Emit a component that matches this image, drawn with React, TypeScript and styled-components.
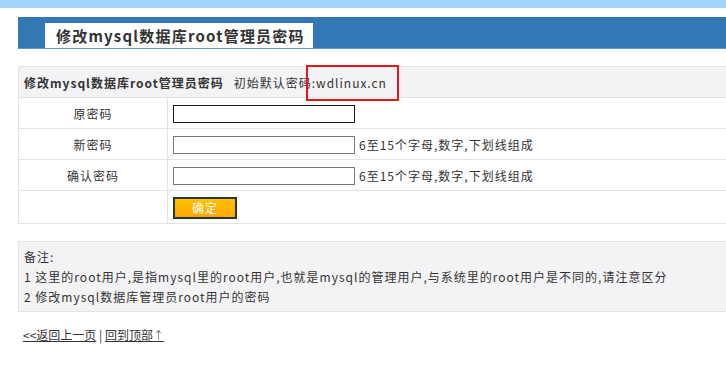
import styled, { createGlobalStyle } from 'styled-components';

const GlobalStyle = createGlobalStyle`
  body {
    margin: 0;
    font-family: "Noto Sans CJK SC", "Noto Sans", sans-serif;
    font-size: 12px;
    letter-spacing: 1px;
    color: #333;
    background: #fff;
    overflow: hidden;
  }
`;

const rows = [
  { label: '原密码', hint: '', focused: true },
  { label: '新密码', hint: '6至15个字母,数字,下划线组成', focused: false },
  { label: '确认密码', hint: '6至15个字母,数字,下划线组成', focused: false },
];

export default function App() {
  return (
    <>
      <GlobalStyle />
      <TopStrip />
      <Main>
        <TitleBar>
          <Tab>修改mysql数据库root管理员密码</Tab>
        </TitleBar>
        <FormTable>
          <tbody>
            <HeadRow>
              <HeadCell colSpan={2}>
                <strong>修改mysql数据库root管理员密码</strong>
                <Default>
                  初始默认密码<Marked>:wdlinux.cn<RedBox /></Marked>
                </Default>
              </HeadCell>
            </HeadRow>
            {rows.map((r) => (
              <Row key={r.label}>
                <LabelCell>{r.label}</LabelCell>
                <FieldCell>
                  <Input type="password" $focused={r.focused} />
                  {r.hint && <Hint>{r.hint}</Hint>}
                </FieldCell>
              </Row>
            ))}
            <Row $last>
              <LabelCell />
              <FieldCell>
                <Button>确定</Button>
              </FieldCell>
            </Row>
          </tbody>
        </FormTable>
        <Notes>
          <div>备注:</div>
          <div>1 这里的root用户,是指mysql里的root用户,也就是mysql的管理用户,与系统里的root用户是不同的,请注意区分</div>
          <div>2 修改mysql数据库管理员root用户的密码</div>
        </Notes>
        <Links>
          <a href="#">&lt;&lt;返回上一页</a> | <a href="#">回到顶部<Arrow>↑</Arrow></a>
        </Links>
      </Main>
    </>
  );
}

const TopStrip = styled.div`
  height: 8px;
  background: #a6d4fa;
`;

const Main = styled.div`
  padding: 9px 0 0 18px;
`;

const TitleBar = styled.div`
  height: 32px;
  background: #3178b4;
  border-bottom: 1px solid #5b97c8;
  box-sizing: border-box;
  display: flex;
  align-items: flex-end;
  padding-left: 27px;
`;

const Tab = styled.div`
  height: 25px;
  line-height: 25px;
  background: #fff;
  padding: 0 8px 0 11px;
  font-size: 15px;
  font-weight: bold;
  letter-spacing: 1.2px;
  color: #333;
`;

const FormTable = styled.table`
  margin-top: 17px;
  width: 100%;
  border-collapse: collapse;
  border-top: 1px solid #e3e3e3;
  border-left: 1px solid #e3e3e3;
`;

const HeadRow = styled.tr`
  height: 31px;
  background: #f3f3f5;
`;

const HeadCell = styled.td`
  padding: 0 0 0 5px;
  border-bottom: 1px solid #e3e3e3;
  font-size: 12px;
  strong {
    font-weight: bold;
    color: #333;
  }
`;

const Default = styled.span`
  margin-left: 10px;
`;

const Marked = styled.span`
  position: relative;
`;

const RedBox = styled.span`
  position: absolute;
  left: -6px;
  right: -12px;
  top: -9px;
  bottom: -10px;
  border: 2px solid #e3161b;
`;

const Row = styled.tr<{ $last?: boolean }>`
  height: ${(p) => (p.$last ? 33 : 31)}px;
  td {
    border-bottom: 1px solid #e3e3e3;
  }
`;

const LabelCell = styled.td`
  width: 148px;
  text-align: center;
  border-right: 1px solid #e3e3e3;
  padding: 0;
`;

const FieldCell = styled.td`
  padding: 0 0 0 5px;
`;

const Input = styled.input<{ $focused: boolean }>`
  box-sizing: border-box;
  width: 182px;
  height: 18px;
  margin: 0;
  padding: 0 2px;
  border: 1px solid ${(p) => (p.$focused ? '#1a1a1a' : '#777')};
  outline: none;
  vertical-align: middle;
`;

const Hint = styled.span`
  margin-left: 4px;
  vertical-align: middle;
`;

const Button = styled.button`
  box-sizing: border-box;
  width: 64px;
  height: 22px;
  margin: 1px 0 0;
  padding: 0;
  border: 2px solid #2b3535;
  background: linear-gradient(#ffc200, #ffa600);
  color: #fff;
  font-family: "Noto Sans CJK SC", sans-serif;
  font-size: 12px;
  letter-spacing: 1px;
  cursor: pointer;
`;

const Notes = styled.div`
  margin-top: 17px;
  height: 71px;
  box-sizing: border-box;
  padding: 5px 5px;
  background: #f3f3f5;
  border-top: 1px solid #e3e3e3;
  border-bottom: 1px solid #e3e3e3;
  border-left: 1px solid #e3e3e3;
  line-height: 20px;
`;

const Links = styled.div`
  margin-top: 13px;
  padding-left: 5px;
  line-height: 20px;
  letter-spacing: 0;
  a {
    color: #333;
    text-decoration: underline;
  }
`;

const Arrow = styled.span`
  font-size: 11px;
  font-weight: 300;
`;
